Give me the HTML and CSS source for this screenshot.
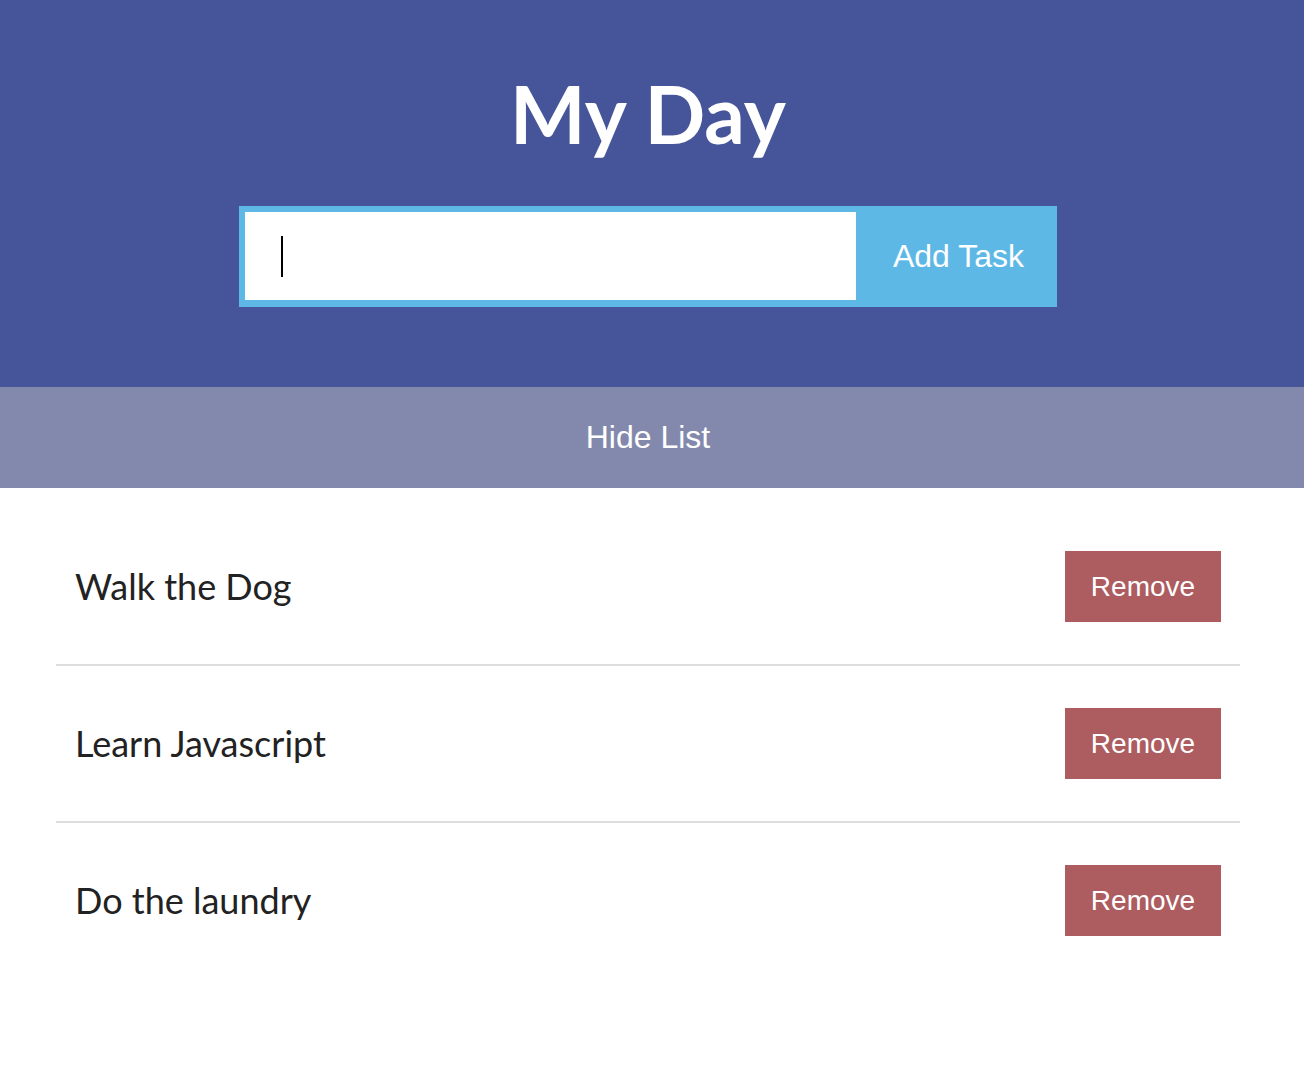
FILE: index.html
```html
<!DOCTYPE html>
<html lang="en">
<head>
<meta charset="utf-8">
<title>My Day</title>
<link rel="stylesheet" href="styles.css">
</head>
<body>
<header class="top">
  <h1 class="title">My Day</h1>
  <form class="add-form">
    <div class="input-wrap">
      <input class="task-input" type="text" aria-label="New task">
      <span class="caret"></span>
    </div>
    <button class="add-btn" type="button">Add Task</button>
  </form>
</header>
<button class="toggle-bar" type="button">Hide List</button>
<ul class="tasks">
  <li class="task"><span class="task-name">Walk the Dog</span><button class="remove-btn" type="button">Remove</button></li>
  <li class="task"><span class="task-name">Learn Javascript</span><button class="remove-btn" type="button">Remove</button></li>
  <li class="task"><span class="task-name">Do the laundry</span><button class="remove-btn" type="button">Remove</button></li>
</ul>
</body>
</html>
```
FILE: styles.css
```css
* { box-sizing: border-box; }
body {
  margin: 0;
  background: #ffffff;
  font-family: "Liberation Sans", Arial, sans-serif;
}
.top {
  background: #46549a;
  padding: 65px 8px 80px 0;
  text-align: center;
}
.title {
  margin: 0;
  font-family: Lato, "Liberation Sans", sans-serif;
  font-weight: 700;
  font-size: 80px;
  line-height: 96px;
  color: #ffffff;
}
.add-form {
  margin: 45px auto 0;
  width: 818px;
  height: 101px;
  display: flex;
  background: #5eb8e6;
  padding: 6px 0 6px 6px;
}
.input-wrap {
  position: relative;
  width: 611px;
  height: 88px;
}
.task-input {
  width: 100%;
  height: 100%;
  border: 0;
  margin: 0;
  padding: 0 0 0 37px;
  font-size: 32px;
  background: #ffffff;
  outline: none;
}
.caret {
  position: absolute;
  left: 36px;
  top: 24px;
  width: 2px;
  height: 41px;
  background: #000000;
}
.add-btn {
  flex: 1;
  margin: -6px 0;
  border: 0;
  padding: 0 0 0 4px;
  background: #5eb8e6;
  color: #ffffff;
  font-family: "Liberation Sans", Arial, sans-serif;
  font-size: 32px;
  cursor: pointer;
}
.toggle-bar {
  display: block;
  width: 100%;
  height: 101px;
  border: 0;
  margin: 0;
  padding: 0 8px 0 0;
  background: #8389ac;
  color: #ffffff;
  font-family: "Liberation Sans", Arial, sans-serif;
  font-size: 32px;
  cursor: pointer;
}
.tasks {
  list-style: none;
  margin: 21px 64px 0 56px;
  padding: 0;
}
.task {
  display: flex;
  align-items: center;
  justify-content: space-between;
  padding: 42px 19px;
  border-bottom: 2px solid #dddddd;
}
.task:last-child { border-bottom: 0; }
.task-name {
  font-family: Lato, "Liberation Sans", sans-serif;
  font-size: 36px;
  color: #222222;
  margin-top: -2px;
}
.remove-btn {
  width: 156px;
  height: 71px;
  border: 0;
  padding: 0;
  background: #ad5c60;
  color: #ffffff;
  font-family: "Liberation Sans", Arial, sans-serif;
  font-size: 28px;
  cursor: pointer;
}
```
